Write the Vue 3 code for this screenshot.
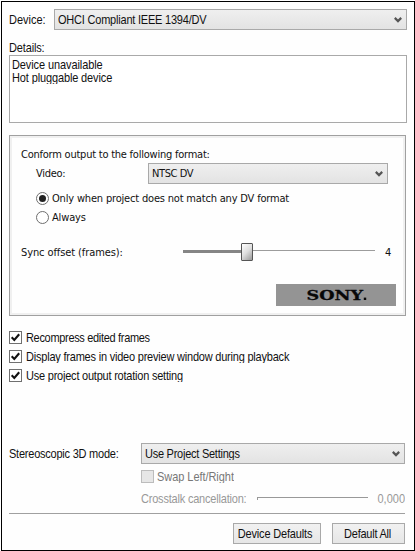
<script setup>
import { ref } from 'vue'

const details = [
  { text: 'Device unavailable', cls: 'w-unavailable' },
  { text: 'Hot pluggable device', cls: 'w-hot' },
]
const match = ref('mismatch')
const options = ref([
  { label: 'Recompress edited frames', cls: 'w-recompress', on: true },
  { label: 'Display frames in video preview window during playback', cls: 'w-display', on: true },
  { label: 'Use project output rotation setting', cls: 'w-rotation', on: true },
])
</script>

<template>
  <main class="dialog">
    <div class="row device-row">
      <span class="tall">Device:</span>
      <button class="combo">
        <span class="tall w-ohci">OHCI Compliant IEEE 1394/DV</span>
        <svg class="chevron" viewBox="0 0 8 6"><path d="M0.8 0.9 4 4.1 7.2 0.9" /></svg>
      </button>
    </div>
    <div class="details-label"><span class="tall w-details">Details:</span></div>
    <div class="details"><div v-for="d in details" :key="d.text" class="tall" :class="d.cls">{{ d.text }}</div></div>

    <section class="group">
      <div class="group-title"><span class="w-conform">Conform output to the following format:</span></div>
      <div class="row video-row">
        <span class="video-label">Video:</span>
        <button class="combo">
          <span class="w-ntsc">NTSC DV</span>
          <svg class="chevron" viewBox="0 0 8 6"><path d="M0.8 0.9 4 4.1 7.2 0.9" /></svg>
        </button>
      </div>
      <div class="row radio-row first" @click="match = 'mismatch'">
        <i class="radio" :class="{ on: match === 'mismatch' }"></i>
        <span class="w-only">Only when project does not match any DV format</span>
      </div>
      <div class="row radio-row" @click="match = 'always'">
        <i class="radio" :class="{ on: match === 'always' }"></i>
        <span class="w-always">Always</span>
      </div>
      <div class="row sync-row">
        <span class="sync-label"><span class="w-sync">Sync offset (frames):</span></span>
        <div class="slider"><i class="filled"></i><i class="thumb"></i><i class="rest"></i></div>
        <span class="sync-value">4</span>
      </div>
      <div class="brand"><svg viewBox="0 0 120 22"><text x="30.5" y="16" textLength="56.5" lengthAdjust="spacingAndGlyphs">SONY</text><rect x="87.8" y="13.6" width="2.4" height="2.4" /></svg></div>
    </section>

    <div class="checks">
      <div v-for="o in options" :key="o.label" class="row check-row" @click="o.on = !o.on">
        <i class="check"><svg v-if="o.on" viewBox="0 0 11 11"><path d="M1.7 5.3 4.3 8 9.2 2.2" /></svg></i>
        <span class="tall" :class="o.cls">{{ o.label }}</span>
      </div>
    </div>

    <div class="row stereo-row">
      <span class="stereo-label"><span class="tall w-stereo">Stereoscopic 3D mode:</span></span>
      <button class="combo">
        <span class="tall w-use">Use Project Settings</span>
        <svg class="chevron" viewBox="0 0 8 6"><path d="M0.8 0.9 4 4.1 7.2 0.9" /></svg>
      </button>
    </div>
    <div class="row swap-row"><i class="check disabled"></i><span class="tall w-swap">Swap Left/Right</span></div>
    <div class="row cross-row">
      <span class="cross-label"><span class="tall w-cross">Crosstalk cancellation:</span></span>
      <i class="cross-track"></i>
      <span class="tall cross-value">0,000</span>
    </div>
    <footer class="row footer">
      <button class="btn wide"><span class="tall w-dd">Device Defaults</span></button>
      <button class="btn"><span class="tall w-da">Default All</span></button>
    </footer>
  </main>
</template>

<style>
body { background: #fff; }
</style>

<style scoped>
.dialog {
  box-sizing: border-box;
  width: 414px;
  height: 550px;
  margin: 1px 0 0 1px;
  padding: 7px 7px 0;
  border: 1px solid #000;
  background: #fefefe;
  color: #111;
  font: 11px/13px "Liberation Sans", Arial, sans-serif;
  letter-spacing: 0;
  white-space: nowrap;
}
.row { display: flex; align-items: center; }
/* Narrow, tall dialog lettering */
.tall { display: block; transform: scaleY(1.08); transform-origin: 0 0; }
.combo {
  display: flex;
  align-items: center;
  justify-content: space-between;
  box-sizing: border-box;
  height: 21px;
  margin: 0;
  padding: 0 4px 0 3px;
  border: 1px solid #a9a9a9;
  background: linear-gradient(#efefef, #e3e3e3);
  color: inherit;
  font: inherit;
  letter-spacing: inherit;
}
.chevron { width: 8px; height: 6px; fill: none; stroke: #555; stroke-width: 2.2; }
.device-row .combo { width: 353px; margin-left: auto; margin-right: -1px; }
.device-row { height: 21px; width: 397px; }
.details-label { height: 13px; margin: 11px 0 1px; }
.details {
  box-sizing: border-box;
  width: 398px;
  height: 68px;
  padding: 2px;
  border: 1px solid #a9a9a9;
  background: #fff;
}
.group {
  box-sizing: border-box;
  width: 397px;
  height: 181px;
  margin-top: 12px;
  padding: 12px 9px 0 11px;
  border: 1px solid #a0a0a0;
  box-shadow: inset 0 0 0 2px #f0f0f0;
  font: 11px/13px "DejaVu Sans Condensed", "DejaVu Sans", sans-serif;
  font-stretch: condensed;
}
.group-title { height: 13px; margin-bottom: 2px; }
.video-row { height: 21px; padding-left: 15px; }
.video-label { width: 112px; letter-spacing: -0.3px; }
.video-row .combo { width: 240px; padding-right: 4px; }
.radio-row { height: 19px; padding-left: 15px; }
.radio-row.first { margin-top: 4px; height: 20px; }
.radio {
  display: grid;
  place-items: center;
  box-sizing: border-box;
  width: 13px;
  height: 13px;
  margin-right: 3px;
  border: 1px solid #6e6e6e;
  border-radius: 50%;
  background: #fff;
}
.radio.on::after { content: ""; width: 7px; height: 7px; border-radius: 50%; background: #222; }
.sync-row { height: 20px; margin-top: 15px; }
.sync-label { width: 162px; }
.slider { display: flex; width: 192px; height: 18px; }
.filled { width: 58px; height: 3px; margin-top: 7px; background: #858585; }
.thumb {
  box-sizing: border-box;
  width: 12px;
  height: 18px;
  border: 1px solid #555;
  border-radius: 1px;
  background: linear-gradient(135deg, #fff, #ddd 50%, #999);
}
.rest { flex: 1; height: 1px; margin-top: 7px; background: #9c9c9c; }
.sync-value { margin-left: 10px; }
.brand { width: 120px; height: 22px; margin: 22px 0 0 auto; background: #949494; }
.brand svg { display: block; width: 120px; height: 22px; fill: #080808; }
.brand text { font: bold 13.5px "DejaVu Serif", serif; stroke: #080808; stroke-width: 0.3; }
.checks { margin-top: 12px; }
.check-row { height: 19px; }
.check {
  box-sizing: border-box;
  width: 13px;
  height: 13px;
  margin-right: 4px;
  border: 1px solid #707070;
  background: #fff;
}
.check svg { display: block; width: 11px; height: 11px; fill: none; stroke: #111; stroke-width: 2.1; }
.check.disabled { margin-right: 3px; border-color: #bcbcbc; background: #e6e6e6; }
.stereo-row { height: 21px; margin-top: 58px; }
.stereo-label { width: 132px; }
.stereo-row .combo { width: 264px; padding-right: 4px; }
.swap-row { height: 13px; margin: 6px 0 0 132px; color: #777; }
.cross-row { height: 15px; margin: 8px 0 0 132px; color: #999; }
.cross-label { flex: none; width: 116px; }
.cross-track { box-sizing: border-box; flex: none; width: 111px; height: 3px; border-top: 1px solid #999; border-left: 1px solid #999; }
.cross-value { margin-left: auto; margin-right: 2px; }
.footer { box-sizing: border-box; width: 396px; height: 31px; margin-top: 7px; padding-top: 8px; border-top: 1px solid #a0a0a0; justify-content: flex-end; gap: 11px; }
.btn {
  box-sizing: border-box;
  width: 73px;
  height: 21px;
  padding: 0 2px 0 0;
  border: 1px solid #a9a9a9;
  background: linear-gradient(#f1f1f1, #e6e6e6);
  color: inherit;
  font: inherit;
  letter-spacing: inherit;
}
.btn.wide { width: 88px; padding-right: 4px; }

/* Per-label tracking */
.w-details { letter-spacing: -0.15px; }
.w-ohci { letter-spacing: -0.21px; }
.w-unavailable { letter-spacing: -0.1px; }
.w-hot { letter-spacing: -0.13px; }
.w-conform { letter-spacing: -0.23px; }
.w-ntsc { letter-spacing: -0.4px; }
.w-only { letter-spacing: -0.18px; }
.w-always { letter-spacing: -0.15px; }
.w-sync { letter-spacing: -0.1px; }
.w-recompress { letter-spacing: -0.32px; }
.w-display { letter-spacing: -0.21px; }
.w-rotation { letter-spacing: -0.22px; }
.w-stereo { letter-spacing: -0.23px; }
.w-use { letter-spacing: -0.25px; }
.w-swap { letter-spacing: -0.05px; }
.w-cross { letter-spacing: -0.2px; }
.w-dd { letter-spacing: -0.17px; }
.w-da { letter-spacing: -0.25px; }
</style>
